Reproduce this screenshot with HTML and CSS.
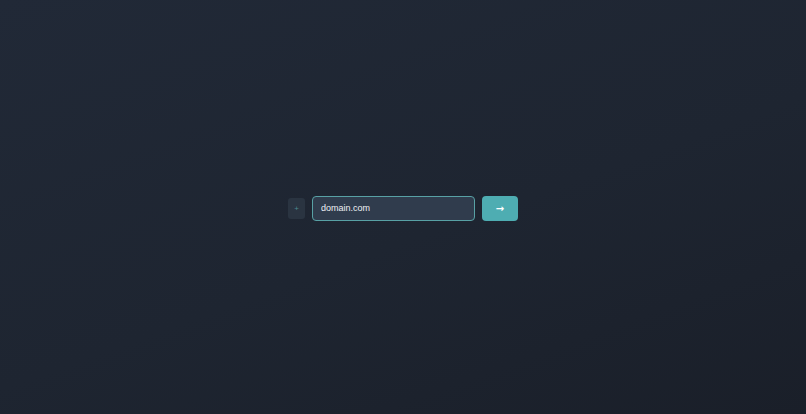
FILE: index.html
```html
<!DOCTYPE html>
<html lang="en">
<head>
    <meta charset="UTF-8">
    <meta name="viewport" content="width=device-width, initial-scale=1.0">
    <title>Domain</title>
    <link rel="stylesheet" href="styles.css">
</head>
<body>
    <div class="page">
        <form class="lookup" onsubmit="return false">
            <button type="button" class="add">+</button>
            <input class="domain" type="text" value="domain.com">
            <button type="submit" class="go">&rarr;</button>
        </form>
    </div>
</body>
</html>
```

FILE: styles.css
```css
html, body {
    margin: 0;
    padding: 0;
    height: 100%;
}

body {
    font-family: "Liberation Sans", Arial, sans-serif;
    background: linear-gradient(160deg, #212937 0%, #1e2531 55%, #1a1f29 100%);
}

.page {
    height: 100%;
    display: flex;
    align-items: center;
    justify-content: center;
}

.lookup {
    display: flex;
    align-items: center;
    gap: 7px;
    margin-top: 2px;
}

.add {
    width: 17px;
    height: 21px;
    padding: 0;
    border: none;
    border-radius: 3px;
    background-color: #2a3441;
    color: #4a8990;
    font-family: inherit;
    font-size: 8px;
    line-height: 22px;
    cursor: pointer;
}

.domain {
    box-sizing: border-box;
    width: 163px;
    height: 25px;
    padding: 0 8px;
    border: 1.5px solid #58a1a5;
    border-radius: 4px;
    background-color: #303c4d;
    color: #eef1f4;
    font-family: inherit;
    font-size: 9px;
    outline: none;
}

.go {
    width: 36px;
    height: 25px;
    padding: 0;
    border: none;
    border-radius: 4px;
    background-color: #4eadb2;
    color: #fff;
    font-family: "DejaVu Sans", sans-serif;
    font-size: 10px;
    font-weight: bold;
    cursor: pointer;
}
```
